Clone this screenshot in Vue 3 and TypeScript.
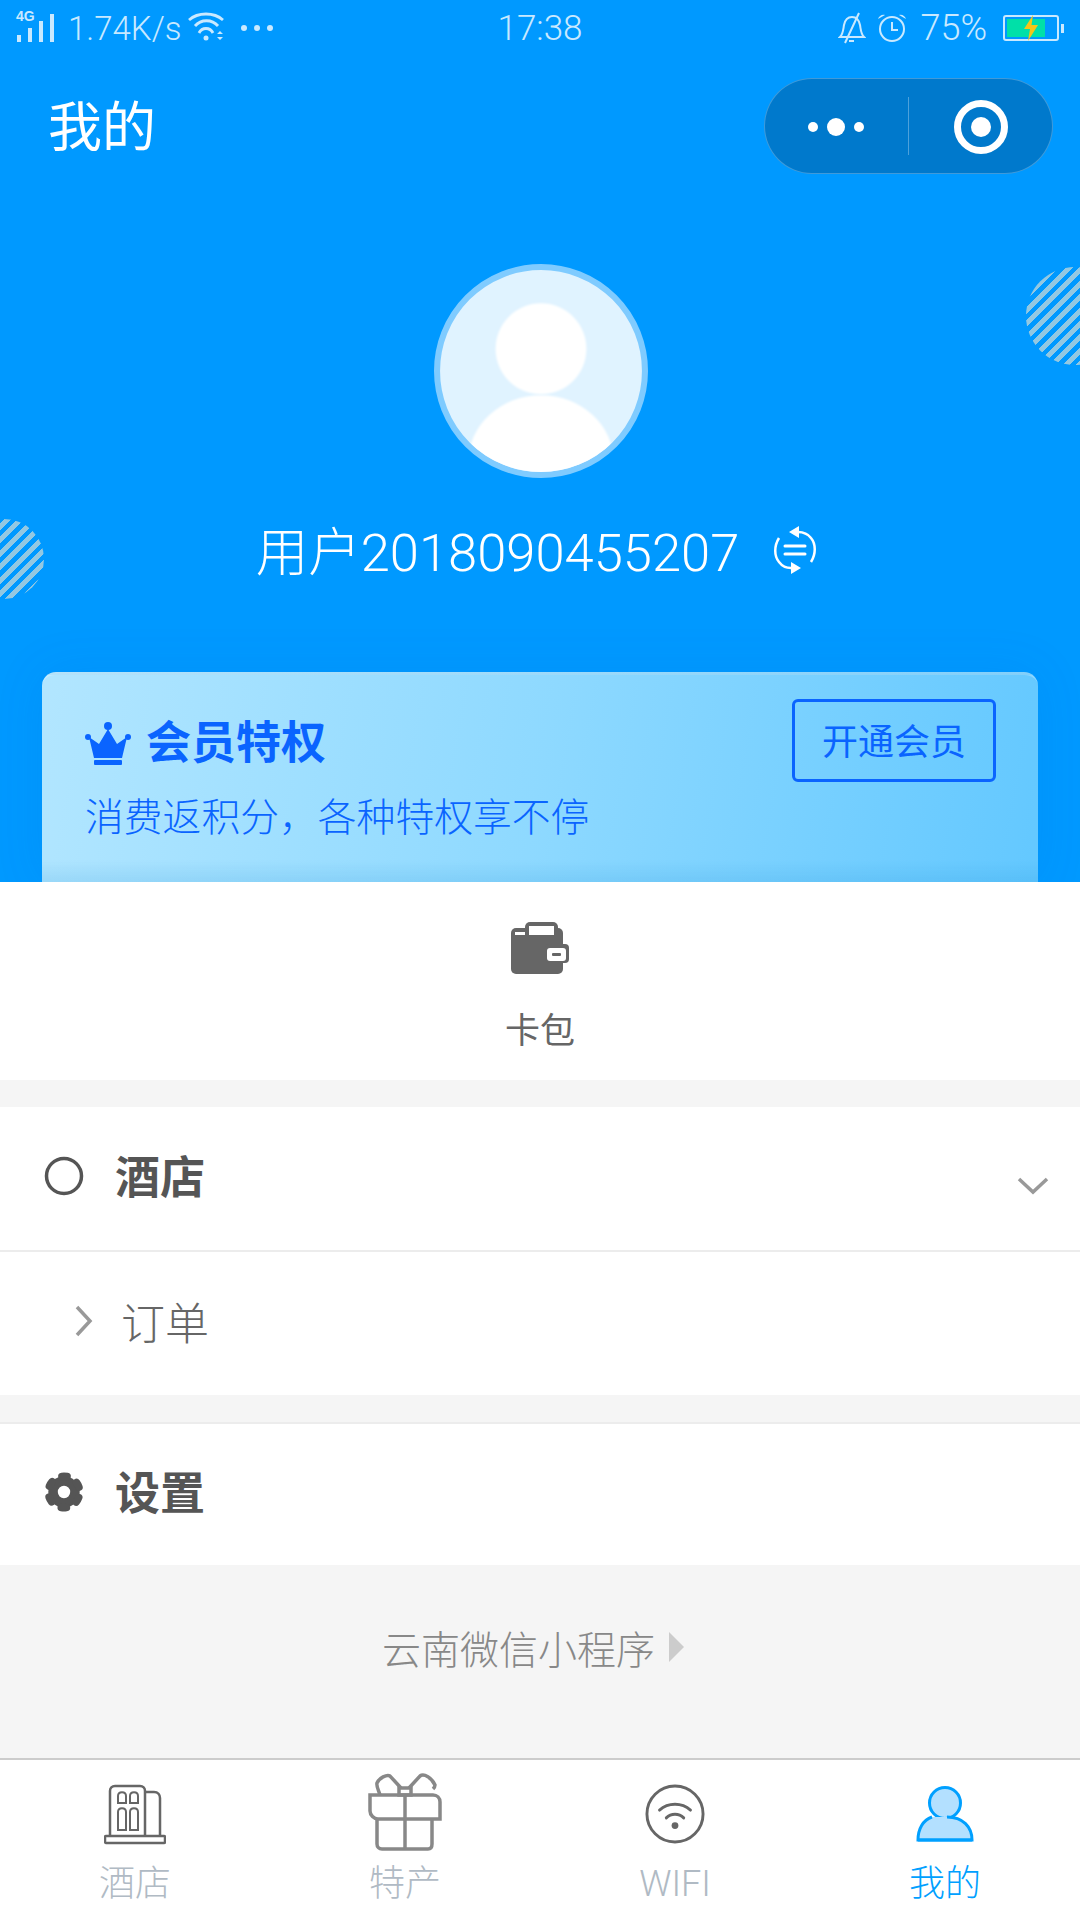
<script setup lang="ts">
import { ref } from 'vue'

interface Tab {
  key: 'hotel' | 'gift' | 'wifi' | 'me'
  label: string
}

const tabs: Tab[] = [
  { key: 'hotel', label: '酒店' },
  { key: 'gift', label: '特产' },
  { key: 'wifi', label: 'WIFI' },
  { key: 'me', label: '我的' },
]
const activeTab = ref<Tab['key']>('me')
</script>

<template>
  <div class="page">
    <section class="hero">
      <i class="stripe stripe-right"></i>
      <i class="stripe stripe-left"></i>

      <div class="status">
        <div class="status-left">
          <span class="signal">
            <b class="net">4G</b>
            <svg width="40" height="28" viewBox="0 0 40 28">
              <rect x="1" y="21" width="4" height="7" />
              <rect x="12" y="14" width="4" height="14" />
              <rect x="23" y="7" width="4" height="21" />
              <rect x="34" y="0" width="4" height="28" />
            </svg>
          </span>
          <span class="speed">1.74K/s</span>
          <svg class="wifi-mini" width="40" height="32" viewBox="0 0 40 32">
            <path d="M1 8C10 0 26 0 35 8" />
            <path d="M7 14C13 7 24 7 30 14" />
            <path d="M11 21C14 15 22 15 25 21" />
            <circle class="solid" cx="18" cy="26" r="2.500" />
            <path class="solid" d="M29 22h6l-3-3zM29 25h6l-3 3z" />
          </svg>
          <svg class="more-mini" width="32" height="6" viewBox="0 0 32 6">
            <circle cx="3" cy="3" r="3" />
            <circle cx="16" cy="3" r="3" />
            <circle cx="29" cy="3" r="3" />
          </svg>
        </div>
        <span class="clock">17:38</span>
        <div class="status-right">
          <svg class="line-mini" width="28" height="32" viewBox="0 0 28 32" fill="none">
            <path d="M2 25c3-3 3-6 4-12 1-5 4-8 8-8s7 3 8 8c1 6 1 9 4 12z" />
            <path d="M21 1 7 31" />
            <path d="M11 29h5" />
          </svg>
          <svg class="line-mini" width="30" height="30" viewBox="0 0 30 30" fill="none">
            <circle cx="15" cy="16" r="12" />
            <path d="M15 9v8h6" />
            <path class="solid" d="M1 6c1-3 4-5 7-4zM29 6c-1-3-4-5-7-4z" />
          </svg>
          <span class="percent">75%</span>
          <span class="battery">
            <span class="battery-fill"></span>
            <svg class="bolt" width="16" height="26" viewBox="0 0 16 26">
              <path d="M10 0 1 14h6l-2 12 10-16H8.500z" />
            </svg>
          </span>
          <i class="battery-tip"></i>
        </div>
      </div>

      <div class="nav">
        <h1 class="title">我的</h1>
        <div class="capsule">
          <span class="capsule-side">
            <svg width="56" height="20" viewBox="0 0 56 20">
              <circle cx="5" cy="10" r="5" />
              <circle cx="28" cy="10" r="9" />
              <circle cx="51" cy="10" r="5" />
            </svg>
          </span>
          <i class="capsule-line"></i>
          <span class="capsule-side">
            <svg width="54" height="54" viewBox="0 0 54 54" fill="none">
              <circle cx="27" cy="27" r="23.500" stroke="#fff" stroke-width="7" />
              <circle cx="27" cy="27" r="10" fill="#fff" />
            </svg>
          </span>
        </div>
      </div>

      <div class="avatar">
        <svg width="214" height="214" viewBox="0 0 212 212">
          <defs>
            <clipPath id="avatar-clip"><circle cx="106" cy="106" r="100" /></clipPath>
          </defs>
          <circle cx="106" cy="106" r="103" fill="#e0f3ff" stroke="#7fcbff" stroke-width="6" />
          <g clip-path="url(#avatar-clip)" fill="#fff">
            <circle class="soft" cx="106" cy="84" r="45" />
            <ellipse class="soft" cx="106" cy="196" rx="72" ry="66" />
          </g>
        </svg>
      </div>

      <div class="user">
        <span class="user-name">用户2018090455207</span>
        <svg class="swap" width="46" height="48" viewBox="0 0 46 48" fill="none">
          <path d="M7 12C2 20 2 30 7 36c3 4 7 6 12 6" />
          <path d="M39 36c5-8 5-18 0-24-3-4-8-6-13-6" />
          <path class="solid" d="M27 0v12l-10-6zM19 36v12l10-6z" />
          <path d="M13 20h20M13 28h20" stroke-width="3" stroke-linecap="round" />
        </svg>
      </div>

      <div class="vip">
        <div class="vip-text">
          <div class="vip-head">
            <svg width="46" height="44" viewBox="0 0 46 44">
              <circle cx="23" cy="4" r="4" />
              <circle cx="3" cy="15" r="3" />
              <circle cx="43" cy="15" r="3" />
              <path d="M23 7l9 15 10-7-5 21H9L4 15l10 7z" />
              <rect x="9" y="38" width="28" height="5" rx="1" />
            </svg>
            <span class="vip-title">会员特权</span>
          </div>
          <p class="vip-sub">消费返积分&#xFF0C;各种特权享不停</p>
        </div>
        <button class="vip-btn" type="button">开通会员</button>
      </div>
    </section>

    <section class="wallet">
      <svg width="58" height="52" viewBox="0 0 58 52" fill="#666">
        <rect x="14" y="0" width="33" height="20" rx="5" />
        <rect x="0" y="6" width="52" height="46" rx="5" />
        <rect x="34" y="22" width="24" height="19" rx="4" />
        <rect x="18" y="4" width="25" height="9" fill="#fff" />
        <rect x="4" y="10" width="10" height="3" fill="#fff" />
        <rect x="36" y="26" width="19" height="13" rx="3" fill="#fff" />
        <rect x="41" y="31" width="9" height="3" rx="1" />
      </svg>
      <span class="wallet-label">卡包</span>
    </section>

    <section class="menu menu-first">
      <div class="row row-head">
        <svg class="row-icon" width="40" height="40" viewBox="0 0 40 40" fill="none">
          <circle cx="20" cy="20" r="17.500" stroke="#555" stroke-width="3.500" />
        </svg>
        <span class="row-title">酒店</span>
        <svg class="row-caret" width="32" height="18" viewBox="0 0 32 18" fill="none">
          <path d="M2 2l14 13L30 2" stroke="#999" stroke-width="3.500" />
        </svg>
      </div>
      <div class="row row-sub">
        <svg class="sub-caret" width="18" height="32" viewBox="0 0 18 32" fill="none">
          <path d="M2 2l13 14L2 30" stroke="#999" stroke-width="3.500" />
        </svg>
        <span class="row-sub-title">订单</span>
      </div>
    </section>

    <section class="menu menu-second">
      <div class="row row-head row-short">
        <!-- six-lobed cog: solid ring plus a dashed outer stroke for the teeth -->
        <svg class="row-icon" width="40" height="40" viewBox="-21 -21 42 42" fill="none" stroke="#555">
          <circle r="11.500" stroke-width="10" />
          <circle r="16.500" stroke-width="8" stroke-linecap="round" stroke-dasharray="5.500 11.780" stroke-dashoffset="-5.900" />
        </svg>
        <span class="row-title">设置</span>
      </div>
    </section>

    <section class="foot">
      <span class="foot-text">云南微信小程序</span>
      <i class="foot-arrow"></i>
    </section>

    <nav class="tabbar">
      <div v-for="tab in tabs" :key="tab.key" class="tab" :class="[tab.key, { active: tab.key === activeTab }]">
        <span class="tab-icon">
          <svg v-if="tab.key === 'hotel'" width="62" height="62" viewBox="0 0 62 62" fill="none" stroke="#666" stroke-width="2.500">
            <path d="M6 53V8c0-3 2-5 5-5h25c3 0 5 2 5 5v45" />
            <path d="M41 9h9c4 0 6 3 6 6v38" />
            <rect x="1" y="53" width="60" height="7" rx="1" />
            <path d="M14 20v-7c0-5 8-5 8 0v7zM26 20v-7c0-5 8-5 8 0v7z" stroke-width="2" />
            <path d="M14 47V29c0-5 8-5 8 0v18zM26 47V29c0-5 8-5 8 0v18z" stroke-width="2" />
          </svg>
          <svg v-else-if="tab.key === 'gift'" width="74" height="78" viewBox="0 0 74 78" fill="none" stroke="#888" stroke-width="3.500">
            <path d="M2 22h63c4 0 7 3 7 7v17H10c-4 0-8-4-8-8z" />
            <path d="M9 46v25c0 3 2 5 5 5h46c3 0 4-2 4-5V46" />
            <path d="M37 22v54" />
            <rect x="31" y="15" width="12" height="7" />
            <path d="M33 15 22 3c-3-2-11 2-13 7-1 3 2 8 3 12" />
            <path d="M41 15 52 3c4-3 12 2 15 9 0 2-1 3-2 4" />
          </svg>
          <svg v-else-if="tab.key === 'wifi'" width="60" height="60" viewBox="0 0 62 62" fill="none" stroke="#666" stroke-width="3">
            <circle cx="31" cy="31" r="29" />
            <path d="M15 27c9-8 23-8 32 0" stroke-linecap="round" />
            <path d="M22 35c5-5 13-5 18 0" stroke-linecap="round" />
            <circle cx="31" cy="43" r="3.500" fill="#666" stroke="none" />
          </svg>
          <svg v-else width="58" height="56" viewBox="0 0 58 56" fill="#b3e0ff" stroke="#00a0ff" stroke-width="3">
            <circle cx="29" cy="17" r="15.500" />
            <path d="M16 31C7 34 2 43 2 54h54c0-13-9-23-25-23" />
            <path d="M2 54h54" />
          </svg>
        </span>
        <span class="tab-label">{{ tab.label }}</span>
      </div>
    </nav>
  </div>
</template>

<style scoped>
.page {
  width: 1080px;
  height: 1920px;
  display: flex;
  flex-direction: column;
  background: #f5f5f5;
  font-family: "Roboto", "Noto Sans CJK SC", sans-serif;
  overflow: hidden;
}

/* blue header */
.hero {
  position: relative;
  height: 882px;
  flex: none;
  background: #0099ff;
  color: #fff;
  display: flex;
  flex-direction: column;
  overflow: hidden;
}
.stripe {
  position: absolute;
  border-radius: 50%;
  background: repeating-linear-gradient(135deg, #93c8e2 0 5px, transparent 5px 9.500px);
}
.stripe-right {
  left: 1026px;
  top: 267px;
  width: 98px;
  height: 98px;
}
.stripe-left {
  left: -36px;
  top: 519px;
  width: 80px;
  height: 80px;
}

.status {
  height: 56px;
  padding: 0 16px;
  display: grid;
  grid-template-columns: 1fr auto 1fr;
  align-items: center;
  color: #c9e9ff;
  font-size: 33px;
  font-weight: 300;
}
.status svg {
  fill: #c9e9ff;
}
.status-left,
.status-right {
  display: flex;
  align-items: center;
}
.status-right {
  justify-content: flex-end;
}
.signal {
  position: relative;
  width: 40px;
  height: 28px;
}
.signal svg {
  display: block;
}
.net {
  position: absolute;
  left: 0;
  top: -5px;
  font-size: 14px;
  line-height: 14px;
  font-weight: 700;
  font-family: "Liberation Sans", sans-serif;
}
.speed {
  margin-left: 12px;
}
.wifi-mini {
  margin-left: 6px;
}
.wifi-mini path {
  fill: none;
  stroke: #c9e9ff;
  stroke-width: 2.800;
}
.wifi-mini .solid {
  fill: #c9e9ff;
  stroke: none;
}
.line-mini .solid {
  stroke: none;
}
.more-mini {
  margin-left: 13px;
}
.clock {
  font-size: 35px;
}
.line-mini {
  fill: none !important;
  stroke: #c9e9ff;
  stroke-width: 2;
  margin-right: 11px;
}
.line-mini .solid {
  fill: #c9e9ff;
}
.percent {
  margin-left: 2px;
  margin-right: 16px;
  font-size: 36px;
}
.battery {
  position: relative;
  width: 56px;
  height: 26px;
  border: 2px solid #c9e9ff;
  border-radius: 3px;
  box-sizing: border-box;
  padding: 2px;
  display: block;
}
.battery-fill {
  display: block;
  width: 38px;
  height: 100%;
  background: #00e0a8;
}
.bolt {
  position: absolute;
  left: 18px;
  top: -2px;
  fill: #f5c518 !important;
}
.battery-tip {
  width: 3px;
  height: 9px;
  margin-left: 2px;
  background: #c9e9ff;
}

.nav {
  height: 134px;
  padding: 0 27px 0 48px;
  display: flex;
  align-items: center;
  justify-content: space-between;
}
.title {
  margin: 12px 0 0;
  font-size: 54px;
  font-weight: 400;
  line-height: 70px;
}
.capsule {
  width: 289px;
  height: 96px;
  margin-top: 5px;
  box-sizing: border-box;
  padding-top: 3px;
  border: 1.500px solid rgba(255, 255, 255, 0.25);
  border-radius: 48px;
  background: #0079cc;
  display: flex;
  align-items: center;
}
.capsule-side {
  flex: 1;
  display: flex;
  align-items: center;
  justify-content: center;
}
.capsule-side svg circle {
  fill: #fff;
}
.capsule-side svg circle[stroke] {
  fill: none;
}
.capsule-line {
  width: 1.500px;
  height: 58px;
  margin-top: -3px;
  background: rgba(255, 255, 255, 0.3);
}

.avatar {
  margin: 74px 0 0 434px;
  width: 214px;
  height: 214px;
}
.avatar svg {
  display: block;
}
.soft {
  filter: blur(1px);
}

.user {
  margin-top: 43px;
  height: 64px;
  display: flex;
  align-items: center;
  justify-content: center;
  padding-right: 6px;
}
.user-name {
  font-size: 52.500px;
  line-height: 64px;
  font-weight: 300;
}
.swap {
  margin: -6px 0 0 33px;
  stroke: #fff;
  stroke-width: 2.500;
}
.swap .solid {
  fill: #fff;
  stroke: none;
}

.vip {
  margin: 87px 42px 0 42px;
  height: 210px;
  box-sizing: border-box;
  padding: 24px 42px 0 43px;
  display: flex;
  justify-content: space-between;
  align-items: flex-start;
  border-radius: 14px 14px 0 0;
  border-top: 3px solid rgba(255, 255, 255, 0.25);
  background:
    linear-gradient(to top, rgba(0, 120, 200, 0.12), transparent 22px),
    linear-gradient(100deg, #b2e6ff 0%, #8ed9ff 50%, #63c8ff 100%);
  box-shadow: 0 0 50px rgba(0, 90, 200, 0.1);
}
.vip-text {
  padding-top: 15px;
}
.vip-head {
  display: flex;
  align-items: center;
  gap: 15px;
  height: 60px;
  color: #0a64ff;
}
.vip-head svg {
  fill: #0a64ff;
  display: block;
}
.vip-title {
  font-size: 45px;
  font-weight: 700;
  line-height: 60px;
}
.vip-sub {
  margin: 19px 0 0;
  color: #0a64ff;
  font-size: 38.800px;
  line-height: 50px;
  font-weight: 300;
  white-space: nowrap;
}
.vip-btn {
  width: 204px;
  height: 83px;
  padding: 0 0 4px;
  border: 3px solid #0a64ff;
  border-radius: 6px;
  background: transparent;
  color: #0a64ff;
  font-family: inherit;
  font-size: 36px;
  font-weight: 400;
}

/* wallet strip */
.wallet {
  height: 198px;
  flex: none;
  background: #fff;
  display: flex;
  flex-direction: column;
  align-items: center;
  padding-top: 40px;
  box-sizing: border-box;
}
.wallet-label {
  margin-top: 34px;
  font-size: 35px;
  line-height: 48px;
  color: #666;
}

/* menu groups */
.menu {
  background: #fff;
  flex: none;
}
.menu-first {
  margin-top: 27px;
}
.menu-second {
  margin-top: 27px;
  border-top: 2px solid #ececec;
}
.row {
  display: flex;
  align-items: center;
}
.row-head {
  height: 143px;
  box-sizing: border-box;
  padding: 0 31px 6px 44px;
}
.row-short {
  height: 141px;
}
.row-icon {
  flex: none;
}
.row-title {
  margin: 0 0 3px 31px;
  font-size: 45px;
  font-weight: 700;
  color: #555;
}
.row-caret {
  margin: 20px 0 0 auto;
}
.row-sub {
  height: 145px;
  box-sizing: border-box;
  padding: 0 0 6px 75px;
  border-top: 2px solid #ececec;
}
.row-sub-title {
  margin-left: 28px;
  font-size: 44px;
  font-weight: 300;
  color: #666;
}

.foot {
  flex: 1;
  display: flex;
  align-items: center;
  justify-content: center;
  padding: 0 14px 30px 0;
}
.foot-text {
  font-size: 39px;
  font-weight: 300;
  color: #888;
}
.foot-arrow {
  margin-left: 14px;
  border-left: 15px solid #ccc;
  border-top: 15px solid transparent;
  border-bottom: 15px solid transparent;
}

/* bottom tabs */
.tabbar {
  height: 162px;
  flex: none;
  box-sizing: border-box;
  border-top: 2px solid #ccc;
  background: #fff;
  display: grid;
  grid-template-columns: repeat(4, 1fr);
}
.tab {
  display: flex;
  flex-direction: column;
  align-items: center;
}
.tab-icon {
  height: 100px;
  display: flex;
  align-items: flex-end;
  justify-content: center;
  box-sizing: border-box;
}
.hotel .tab-icon {
  padding-bottom: 15px;
}
.wifi .tab-icon {
  padding-bottom: 16px;
}
.gift .tab-icon {
  padding-bottom: 9px;
}
.me .tab-icon {
  padding-bottom: 18px;
}
.tab-icon svg {
  display: block;
}
.tab-label {
  font-size: 36px;
  line-height: 48px;
  font-weight: 300;
  color: #b0bac4;
}
.tab.active .tab-label {
  color: #00a0ff;
}
</style>

<style>
html,
body {
  margin: 0;
  padding: 0;
}
</style>
